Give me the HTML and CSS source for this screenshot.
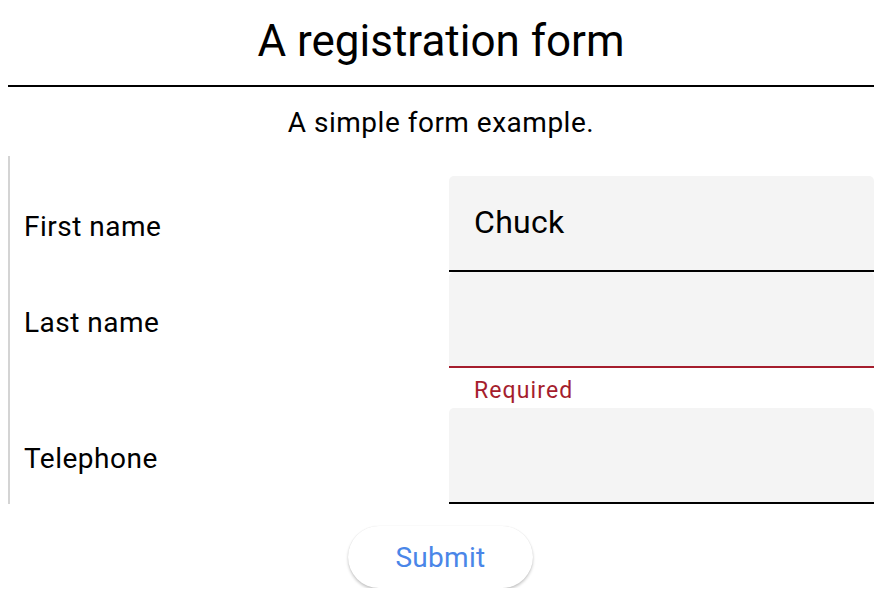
FILE: index.html
```html
<!DOCTYPE html>
<html lang="en">
<head>
<meta charset="utf-8">
<title>A registration form</title>
<link rel="stylesheet" href="styles.css">
</head>
<body>
<header class="head">
  <h1 class="title">A registration form</h1>
  <hr class="rule">
  <p class="subtitle">A simple form example.</p>
</header>
<form class="form">
  <div class="row">
    <label class="label" for="first">First name</label>
    <div class="field-wrap">
      <div class="field"><span class="value">Chuck</span></div>
    </div>
  </div>
  <div class="row">
    <label class="label" for="last">Last name</label>
    <div class="field-wrap">
      <div class="field field-error"></div>
      <div class="helper">Required</div>
    </div>
  </div>
  <div class="row">
    <label class="label" for="tel">Telephone</label>
    <div class="field-wrap">
      <div class="field"></div>
    </div>
  </div>
</form>
<div class="actions">
  <button class="submit" type="button">Submit</button>
</div>
</body>
</html>
```
FILE: styles.css
```css
html, body {
  background: #fff;
}
body {
  margin: 0 18px 0 8px;
  font-family: Roboto, "Noto Sans", sans-serif;
  color: #000;
}
.head {
  display: flex;
  flex-direction: column;
  align-items: stretch;
}
.title {
  margin: 0;
  padding-top: 11px;
  height: 85px;
  box-sizing: border-box;
  font-size: 44px;
  font-weight: 400;
  line-height: 60px;
  text-align: center;
}
.rule {
  margin: 0;
  border: 0;
  height: 2px;
  background: #000;
}
.subtitle {
  margin: 0;
  height: 69px;
  padding-top: 18px;
  box-sizing: border-box;
  font-size: 28px;
  line-height: 36px;
  text-align: center;
  letter-spacing: 0.5px;
}
.form {
  display: flex;
  flex-direction: column;
  border-left: 2px solid #d4d4d4;
  padding-top: 20px;
}
.row {
  display: grid;
  grid-template-columns: 439px 425px;
  align-items: start;
}
.label {
  height: 96px;
  display: flex;
  align-items: center;
  padding-left: 14px;
  padding-top: 4px;
  box-sizing: border-box;
  font-size: 28px;
  letter-spacing: 0.5px;
}
.field-wrap {
  display: flex;
  flex-direction: column;
}
.field {
  height: 96px;
  box-sizing: border-box;
  background: #f4f4f4;
  border-radius: 5px 5px 0 0;
  border-bottom: 2px solid #000;
  display: flex;
  align-items: center;
  padding: 0 25px 2px;
}
.field-error {
  border-bottom-color: #a51d2d;
}
.value {
  font-size: 32px;
  letter-spacing: 0.3px;
}
.helper {
  height: 40px;
  padding: 10px 25px 0;
  box-sizing: border-box;
  color: #a51d2d;
  font-size: 23px;
  line-height: 26px;
  letter-spacing: 1.1px;
}
.actions {
  display: flex;
  justify-content: center;
  padding-top: 22px;
  padding-right: 1px;
}
.submit {
  width: 185px;
  height: 62px;
  border: 0;
  border-radius: 31px;
  background: #fff;
  box-shadow: 0 2px 3px rgba(0,0,0,0.22), 0 0 1px rgba(0,0,0,0.12);
  color: #4a86e8;
  font-family: Roboto, sans-serif;
  font-size: 28px;
  letter-spacing: 0.3px;
}
```
